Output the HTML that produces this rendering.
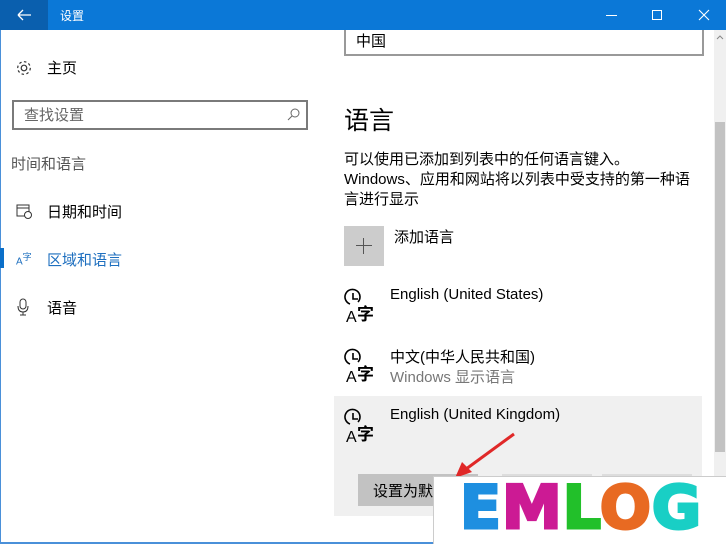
<!DOCTYPE html>
<html><head><meta charset="utf-8"><style>
*{margin:0;padding:0;box-sizing:border-box}
body{width:726px;height:544px;position:relative;overflow:hidden;background:#fff;font-family:"Liberation Sans","Noto Sans CJK SC",sans-serif;color:#000}
.a{position:absolute}
.t{font-size:15px;white-space:nowrap}
</style></head><body>
<div class="a" style="left:0;top:0;width:726px;height:30px;background:#0b78d7"></div>
<div class="a" style="left:0;top:0;width:48px;height:30px;background:#0a5fae"></div>
<div class="a" style="left:0;top:30px;width:1px;height:514px;background:#4a90d9"></div>
<svg class="a" style="left:16px;top:7px" width="16" height="16"><path d="M2 8H15M2 8L7 3M2 8L7 13" stroke="#fff" stroke-width="1.3" fill="none"/></svg>
<div class="a" style="left:60px;top:7px;font-size:12px;color:#fff">设置</div>
<div class="a" style="left:606px;top:15px;width:11px;height:1px;background:#fff"></div>
<div class="a" style="left:652px;top:10px;width:10px;height:10px;border:1px solid #fff"></div>
<svg class="a" style="left:698px;top:9px" width="12" height="12"><path d="M1 1L11 11M11 1L1 11" stroke="#fff" stroke-width="1.1"/></svg>

<svg class="a" style="left:15px;top:59px" width="18" height="18"><circle cx="9" cy="9" r="2.8" fill="none" stroke="#333" stroke-width="1.2"/><circle cx="9" cy="9" r="6.3" fill="none" stroke="#333" stroke-width="1.2" stroke-dasharray="2.5 2.4"/></svg>
<div class="a t" style="left:47px;top:57px">主页</div>
<div class="a" style="left:12px;top:100px;width:296px;height:30px;border:2px solid #7a7a7a"></div>
<div class="a t" style="left:24px;top:104px;color:#666">查找设置</div>
<svg class="a" style="left:287px;top:107px" width="14" height="14"><circle cx="8" cy="6" r="4" fill="none" stroke="#666"/><path d="M5 9L1 13" stroke="#666"/></svg>
<div class="a t" style="left:11px;top:153px;color:#555">时间和语言</div>
<svg class="a" style="left:16px;top:203px" width="16" height="16"><rect x="1" y="2" width="12" height="11" fill="none" stroke="#333"/><path d="M1 5H13" stroke="#333"/><circle cx="12" cy="12" r="3.5" fill="#fff" stroke="#333"/></svg>
<div class="a t" style="left:47px;top:201px">日期和时间</div>
<div class="a" style="left:0;top:248px;width:4px;height:20px;background:#0b6fc9"></div>
<div class="a" style="left:16px;top:250px;font-size:10px;color:#1e6fbf">A<sup style="font-size:9px">字</sup></div>
<div class="a t" style="left:47px;top:249px;color:#1e6fbf">区域和语言</div>
<svg class="a" style="left:16px;top:298px" width="14" height="18"><rect x="4" y="1" width="6" height="10" rx="3" fill="none" stroke="#333"/><path d="M2 8Q2 14 7 14Q12 14 12 8M7 14V17M4 17H10" fill="none" stroke="#333"/></svg>
<div class="a t" style="left:47px;top:297px">语音</div>

<div class="a" style="left:344px;top:30px;width:360px;height:26px;border:2px solid #999;border-top:none"></div>
<div class="a t" style="left:356px;top:30px">中国</div>
<div class="a" style="left:344px;top:101px;font-size:25px">语言</div>
<div class="a t" style="left:344px;top:150px;line-height:20px">可以使用已添加到列表中的任何语言键入。<br>Windows、应用和网站将以列表中受支持的第一种语<br>言进行显示</div>
<div class="a" style="left:344px;top:226px;width:40px;height:40px;background:#ccc"></div>
<div class="a" style="left:356px;top:245px;width:16px;height:1px;background:#555"></div>
<div class="a" style="left:363px;top:238px;width:1px;height:16px;background:#555"></div>
<div class="a t" style="left:394px;top:226px">添加语言</div>
<div class="a" style="left:334px;top:396px;width:368px;height:120px;background:#f0f0f0"></div>
<div class="a" style="left:358px;top:474px;width:120px;height:32px;background:#c2c2c2"></div>
<div class="a t" style="left:373px;top:480px">设置为默</div>
<div class="a" style="left:502px;top:474px;width:90px;height:2px;background:#ddd"></div>
<div class="a" style="left:602px;top:474px;width:90px;height:2px;background:#ddd"></div>

<svg class="a" style="left:344px;top:288px" width="40" height="36"><path d="M14 14A7.5 7.5 0 1 0 6 16" fill="none" stroke="#000" stroke-width="1.6"/><path d="M9 5V11H14" fill="none" stroke="#000" stroke-width="1.6"/><text x="2" y="34" font-size="16" font-family="Liberation Sans">A</text><text x="13" y="32" font-size="17" font-weight="bold" font-family="Noto Sans CJK SC">字</text></svg>
<div class="a t" style="left:390px;top:286px">English (United States)</div>
<svg class="a" style="left:344px;top:348px" width="40" height="36"><path d="M14 14A7.5 7.5 0 1 0 6 16" fill="none" stroke="#000" stroke-width="1.6"/><path d="M9 5V11H14" fill="none" stroke="#000" stroke-width="1.6"/><text x="2" y="34" font-size="16" font-family="Liberation Sans">A</text><text x="13" y="32" font-size="17" font-weight="bold" font-family="Noto Sans CJK SC">字</text></svg>
<div class="a t" style="left:390px;top:346px">中文(中华人民共和国)</div>
<div class="a t" style="left:390px;top:366px;color:#777">Windows 显示语言</div>
<svg class="a" style="left:344px;top:408px" width="40" height="36"><path d="M14 14A7.5 7.5 0 1 0 6 16" fill="none" stroke="#000" stroke-width="1.6"/><path d="M9 5V11H14" fill="none" stroke="#000" stroke-width="1.6"/><text x="2" y="34" font-size="16" font-family="Liberation Sans">A</text><text x="13" y="32" font-size="17" font-weight="bold" font-family="Noto Sans CJK SC">字</text></svg>
<div class="a t" style="left:390px;top:406px">English (United Kingdom)</div>

<div class="a" style="left:714px;top:30px;width:12px;height:514px;background:#f0f0f0"></div>
<div class="a" style="left:715px;top:122px;width:10px;height:330px;background:#c2c2c2"></div>
<svg class="a" style="left:716px;top:34px" width="8" height="6"><path d="M1 5L4 2L7 5" stroke="#888" fill="none"/></svg>
<div class="a" style="left:0;top:542px;width:433px;height:2px;background:#4a90d9"></div>

<svg class="a" style="left:450px;top:430px" width="70" height="52"><path d="M64 4L12 42" stroke="#e02828" stroke-width="3"/><path d="M5 48L12 32L22 42Z" fill="#e02828"/></svg>
<div class="a" style="left:433px;top:476px;width:293px;height:68px;background:#fff;border-left:1px solid #ccc;border-top:1px solid #ccc"></div>
<div class="a" style="left:460px;top:474px;font-family:'DejaVu Sans',sans-serif;font-weight:bold;font-size:60px;line-height:68px;letter-spacing:1px;white-space:nowrap;-webkit-text-stroke:3px"><span style="color:#1e8fe0">E</span><span style="color:#cc1a94">M</span><span style="color:#22c02a">L</span><span style="color:#e86a22">O</span><span style="color:#19cfc5">G</span></div>
</body></html>
